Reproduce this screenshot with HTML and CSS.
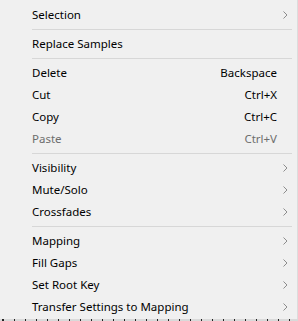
FILE: index.html
```html
<!DOCTYPE html>
<html>
<head>
<meta charset="utf-8">
<link rel="stylesheet" href="styles.css">
</head>
<body>
<div class="screen">
  <div class="menu">
    <div class="item"><span class="label">Selection</span><span class="chev"><svg width="5" height="8" viewBox="0 0 5 8"><polyline points="0.5,0.5 4,4 0.5,7.5" fill="none" stroke="#8c8c8c" stroke-width="1"/></svg></span></div>
    <div class="sep"></div>
    <div class="item"><span class="label">Replace Samples</span><span class="chev"></span></div>
    <div class="sep"></div>
    <div class="item"><span class="label">Delete</span><span class="key">Backspace</span><span class="chev"></span></div>
    <div class="item"><span class="label">Cut</span><span class="key">Ctrl+X</span><span class="chev"></span></div>
    <div class="item"><span class="label">Copy</span><span class="key">Ctrl+C</span><span class="chev"></span></div>
    <div class="item disabled"><span class="label">Paste</span><span class="key">Ctrl+V</span><span class="chev"></span></div>
    <div class="sep"></div>
    <div class="item"><span class="label">Visibility</span><span class="chev"><svg width="5" height="8" viewBox="0 0 5 8"><polyline points="0.5,0.5 4,4 0.5,7.5" fill="none" stroke="#8c8c8c" stroke-width="1"/></svg></span></div>
    <div class="item"><span class="label">Mute/Solo</span><span class="chev"><svg width="5" height="8" viewBox="0 0 5 8"><polyline points="0.5,0.5 4,4 0.5,7.5" fill="none" stroke="#8c8c8c" stroke-width="1"/></svg></span></div>
    <div class="item"><span class="label">Crossfades</span><span class="chev"><svg width="5" height="8" viewBox="0 0 5 8"><polyline points="0.5,0.5 4,4 0.5,7.5" fill="none" stroke="#8c8c8c" stroke-width="1"/></svg></span></div>
    <div class="sep"></div>
    <div class="item"><span class="label">Mapping</span><span class="chev"><svg width="5" height="8" viewBox="0 0 5 8"><polyline points="0.5,0.5 4,4 0.5,7.5" fill="none" stroke="#8c8c8c" stroke-width="1"/></svg></span></div>
    <div class="item"><span class="label">Fill Gaps</span><span class="chev"><svg width="5" height="8" viewBox="0 0 5 8"><polyline points="0.5,0.5 4,4 0.5,7.5" fill="none" stroke="#8c8c8c" stroke-width="1"/></svg></span></div>
    <div class="item"><span class="label">Set Root Key</span><span class="chev"><svg width="5" height="8" viewBox="0 0 5 8"><polyline points="0.5,0.5 4,4 0.5,7.5" fill="none" stroke="#8c8c8c" stroke-width="1"/></svg></span></div>
    <div class="item"><span class="label">Transfer Settings to Mapping</span><span class="chev"><svg width="5" height="8" viewBox="0 0 5 8"><polyline points="0.5,0.5 4,4 0.5,7.5" fill="none" stroke="#8c8c8c" stroke-width="1"/></svg></span></div>
  </div>
  <div class="ruler"></div>
</div>
</body>
</html>
```
FILE: styles.css
```css
html, body {
  margin: 0;
  padding: 0;
  background: #ffffff;
}
.screen {
  width: 298px;
  height: 321px;
  overflow: hidden;
  display: flex;
  flex-direction: column;
}
.menu {
  background: #f0f0f0;
  padding-top: 4px;
  height: 315px;
  border-right: 1px solid #dcdcdc;
  display: flex;
  flex-direction: column;
}
.item {
  height: 22px;
  box-sizing: border-box;
  padding-bottom: 2px;
  display: flex;
  align-items: center;
  padding-left: 32px;
  font-family: "Noto Sans", sans-serif;
  font-size: 11.5px;
  color: #000;
}
.label {
  flex: 1;
  white-space: nowrap;
}
.key {
  white-space: nowrap;
}
.chev {
  width: 20px;
  box-sizing: border-box;
  padding-left: 6px;
  padding-top: 2px;
  display: flex;
  align-items: center;
}
.disabled {
  color: #6d6d6d;
}
.sep {
  height: 7px;
  margin-left: 32px;
  margin-right: 5px;
  display: flex;
  align-items: center;
}
.sep::before {
  content: "";
  flex: 1;
  height: 1px;
  background: #d7d7d7;
}
.ruler {
  height: 2px;
  background-color: #d9d9d9;
  background-image: repeating-linear-gradient(90deg, #222 0 1px, transparent 1px 11px);
  background-position: 3px 0;
}
```
